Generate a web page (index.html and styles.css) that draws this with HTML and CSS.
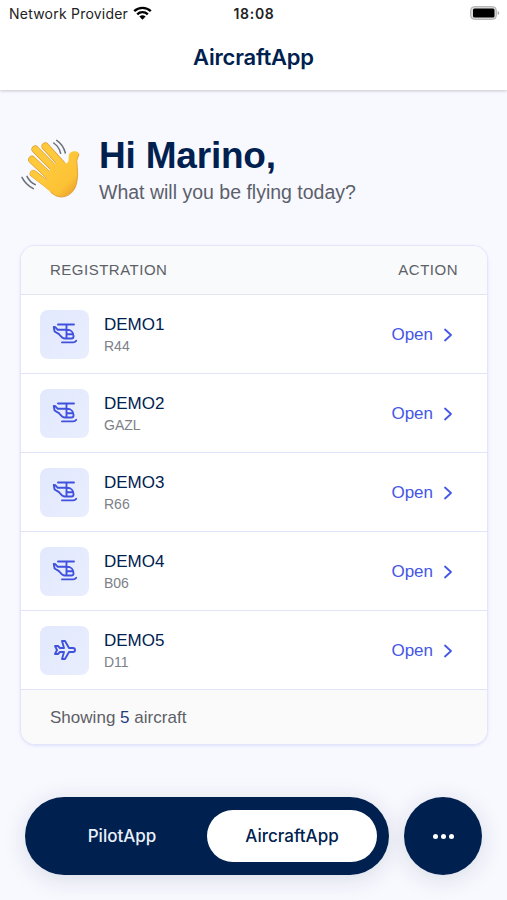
FILE: index.html
```
<!DOCTYPE html>
<html lang="en">

<head>
  <meta charset="UTF-8">
  <meta name="viewport" content="width=device-width, initial-scale=1">
  <title>AircraftApp</title>
  <link rel="stylesheet" href="styles.css">
</head>

<body>
  <svg class="symbols" width="0" height="0">
    <symbol id="helicopter" viewBox="0 0 26 24">
      <path d="M6 2.500H22M14.500 2.500V16.500M1.800 5l1.700.3 2.300 2.500H15c4 0 6.500 2.800 6.500 6.200v.5a2 2 0 0 1-2 2H13c-2.500 0-3.800-1.500-5-3.200-.8-1.200-2-1.800-3.300-2.500L2.600 9.500zM14.500 12.300H21M10 20.400h11.200c1.400 0 2.300-.6 3-1.700" />
    </symbol>
    <symbol id="plane" viewBox="0 0 24 24">
      <path d="M16 10h4a2 2 0 0 1 0 4h-4l-4 7H9l2-7H7l-2 2H2l2-4-2-4h3l2 2h4L9 3h3z" />
    </symbol>
    <symbol id="chevron" viewBox="0 0 10 14">
      <path d="M2 1.500l6 5.500-6 5.500" />
    </symbol>
  </svg>

  <header class="header">
    <div class="status">
      <div class="carrier">
        <span>Network Provider</span>
        <svg class="wifi" viewBox="0 0 19 14">
          <path d="M1.200 5.200a12 12 0 0 1 16.600 0M4.200 8.300a7.600 7.600 0 0 1 10.600 0" />
          <path class="wifi-dot" d="M6.400 10.600a4.500 4.500 0 0 1 6.200 0L9.500 13.800z" />
        </svg>
      </div>
      <div class="time">18:08</div>
      <svg class="battery" viewBox="0 0 30 14">
        <rect x=".7" y=".7" width="25.600" height="12.600" rx="3.500" fill="#ddd" stroke="#aaa" />
        <rect x="3" y="2.600" width="21.500" height="8.800" rx="1.500" fill="#000" />
        <path d="M27.700 5v4q1.600-.6 1.600-2t-1.600-2z" fill="#aaa" />
      </svg>
    </div>
    <h1 class="title">AircraftApp</h1>
  </header>

  <main>
    <section class="greeting">
      <svg class="wave" viewBox="30 39 186 186">
        <defs>
          <linearGradient id="skin" x1="0" y1="0" x2=".75" y2="1">
            <stop offset="0" stop-color="#ffcb3f" />
            <stop offset=".75" stop-color="#fcc235" />
            <stop offset="1" stop-color="#eca32c" />
          </linearGradient>
        </defs>
        <!-- fingers -->
        <g fill="none" stroke-linecap="round">
          <path stroke="#dc9a2a" stroke-width="23" d="M106 64L155 118M76 73L132 130M66 104L125 160" />
          <path stroke="#dc9a2a" stroke-width="22" d="M70 146L125 188" />
          <path stroke="#ffc93c" stroke-width="19" d="M106 64L155 118M76 73L132 130M66 104L125 160M70 146L125 188" />
        </g>
        <!-- palm and thumb -->
        <path fill="url(#skin)" d="M154 108Q163 119 172 113C180 108 172 90 180 84C187 78 198 77 205 83Q210 88 204 97Q199 104 201 116Q206 148 200 174C195 199 176 215 153 216Q138 216 122 202L104 186L113 150L126 121Z" />
        <path fill="none" stroke="#dc9a2a" stroke-width="2.500" d="M206 86q1 6-3 12-4 7-2 18 5 35-1 58c-6 26-24 42-47 42q-15 0-31-14" />
        <g fill="none" stroke="#6b7078" stroke-width="4.500" stroke-linecap="round">
          <path d="M140 46q20 13 26 38M131 54q17 12 21 31M51 154q7 16 25 25M36 157q10 21 34 34" />
        </g>
      </svg>
      <div>
        <h2 class="hello">Hi Marino,</h2>
        <p class="question">What will you be flying today?</p>
      </div>
    </section>

    <section class="card">
      <div class="card-head">
        <span>REGISTRATION</span>
        <span>ACTION</span>
      </div>
      <div class="row">
        <div class="icon"><svg class="heli"><use href="#helicopter" /></svg></div>
        <div class="aircraft">
          <div class="name">DEMO1</div>
          <div class="type">R44</div>
        </div>
        <a class="open">Open <svg class="chevron"><use href="#chevron" /></svg></a>
      </div>
      <div class="row">
        <div class="icon"><svg class="heli"><use href="#helicopter" /></svg></div>
        <div class="aircraft">
          <div class="name">DEMO2</div>
          <div class="type">GAZL</div>
        </div>
        <a class="open">Open <svg class="chevron"><use href="#chevron" /></svg></a>
      </div>
      <div class="row">
        <div class="icon"><svg class="heli"><use href="#helicopter" /></svg></div>
        <div class="aircraft">
          <div class="name">DEMO3</div>
          <div class="type">R66</div>
        </div>
        <a class="open">Open <svg class="chevron"><use href="#chevron" /></svg></a>
      </div>
      <div class="row">
        <div class="icon"><svg class="heli"><use href="#helicopter" /></svg></div>
        <div class="aircraft">
          <div class="name">DEMO4</div>
          <div class="type">B06</div>
        </div>
        <a class="open">Open <svg class="chevron"><use href="#chevron" /></svg></a>
      </div>
      <div class="row">
        <div class="icon"><svg class="plane"><use href="#plane" /></svg></div>
        <div class="aircraft">
          <div class="name">DEMO5</div>
          <div class="type">D11</div>
        </div>
        <a class="open">Open <svg class="chevron"><use href="#chevron" /></svg></a>
      </div>
      <div class="card-foot">Showing <b>5</b> aircraft</div>
    </section>
  </main>

  <nav class="nav">
    <div class="tabs">
      <a class="tab">PilotApp</a>
      <a class="tab active">AircraftApp</a>
    </div>
    <div class="more"><i></i><i></i><i></i></div>
  </nav>
</body>

</html>
```
FILE: styles.css
```
* {
  box-sizing: border-box;
}

body {
  margin: 0;
  height: 900px;
  overflow: hidden;
  display: flex;
  flex-direction: column;
  background-color: #f8f9ff;
  font-family: "Liberation Sans", Arial, sans-serif;
  color: #00214f;
}

svg {
  display: block;
  flex-shrink: 0;
}

.symbols {
  position: absolute;
}

.header {
  height: 90px;
  background: #fff;
  box-shadow: 0 1px 3px rgba(0, 0, 0, 0.2);
}

.status {
  height: 28px;
  padding: 0 7px 2px 9px;
  display: grid;
  grid-template-columns: 1fr auto 1fr;
  align-items: center;
  font-family: Inter, sans-serif;
  font-size: 14px;
  color: #222;
}

.carrier {
  display: flex;
  align-items: center;
  gap: 5px;
  letter-spacing: 0.22px;
  white-space: nowrap;
}

.wifi {
  width: 19px;
  height: 14px;
  margin-top: -1px;
  fill: none;
  stroke: #000;
  stroke-width: 2.4;
}

.wifi .wifi-dot {
  fill: #000;
  stroke: none;
}

.time {
  margin-left: -1px;
  font-weight: 600;
  letter-spacing: 0.7px;
}

.battery {
  width: 30px;
  height: 14px;
  justify-self: end;
}

.title {
  margin: 15px 0 0;
  text-align: center;
  font-family: Inter, sans-serif;
  font-size: 22px;
  line-height: 28px;
  font-weight: 600;
  letter-spacing: -0.2px;
}

.greeting {
  display: flex;
  padding: 44px 0 0 20px;
  gap: 17px;
}

.wave {
  width: 62px;
  height: 62px;
  margin-top: 4px;
}

.hello {
  margin: 0;
  font-size: 37px;
  line-height: 44px;
  letter-spacing: -0.2px;
}

.question {
  margin: 2px 0 0;
  font-size: 19.5px;
  line-height: 24px;
  color: #5b606b;
}

.card {
  height: 500px;
  margin: 41px 19px 0 20px;
  border: 1px solid #e2e5fb;
  border-radius: 15px;
  background: #fff;
  overflow: hidden;
  box-shadow: 0 1px 3px rgba(80, 90, 220, 0.15);
}

.card-head {
  height: 49px;
  padding: 0 29px 2px;
  display: flex;
  justify-content: space-between;
  align-items: center;
  background: #f9fafc;
  border-bottom: 1px solid #e2e4ef;
  font-size: 15px;
  letter-spacing: 0.5px;
  color: #5d6066;
}

.row {
  height: 79px;
  padding: 0 34px 0 19px;
  display: flex;
  align-items: center;
  border-bottom: 1px solid #e1e3f8;
}

.icon {
  width: 49px;
  height: 49px;
  display: flex;
  align-items: center;
  justify-content: center;
  border-radius: 8px;
  background: linear-gradient(135deg, #e2e9fd, #e9eefe);
}

.icon svg {
  width: 24px;
  height: 24px;
  fill: none;
  stroke: #4051dc;
  stroke-width: 1.9;
  stroke-linecap: round;
  stroke-linejoin: round;
}

.icon .heli {
  width: 26px;
}

.aircraft {
  flex: 1;
  padding: 1px 0 0 15px;
}

.name {
  font-size: 17px;
  line-height: 22px;
}

.type {
  font-size: 14px;
  line-height: 20px;
  color: #7c8087;
}

.open {
  display: flex;
  align-items: center;
  gap: 10px;
  padding-top: 1px;
  font-size: 17px;
  color: #4456e6;
}

.chevron {
  width: 10px;
  height: 14px;
  fill: none;
  stroke: #4456e6;
  stroke-width: 1.8;
  stroke-linecap: round;
  stroke-linejoin: round;
}

.card-foot {
  height: 55px;
  padding: 0 29px;
  line-height: 55px;
  background: #fafafb;
  font-size: 17px;
  letter-spacing: 0.02px;
  color: #5d6066;
}

.card-foot b {
  color: #1f3d78;
  font-weight: normal;
}

.nav {
  display: flex;
  gap: 15px;
  padding: 52px 25px 0;
}

.tabs,
.more {
  height: 78px;
  border-radius: 39px;
  background: #00214f;
  box-shadow: 0 4px 24px rgba(0, 20, 60, 0.13);
}

.tabs {
  width: 364px;
  display: flex;
  padding: 13px 12px;
}

.tab {
  flex: 1;
  height: 52px;
  border-radius: 26px;
  text-align: center;
  font-family: Inter, sans-serif;
  font-size: 17px;
  font-weight: 500;
  line-height: 52px;
  color: #eaf0fc;
}

.tab.active {
  background: #fff;
  color: #00214f;
}

.more {
  width: 78px;
  display: flex;
  align-items: center;
  justify-content: center;
  gap: 3px;
}

.more i {
  width: 5px;
  height: 5px;
  border-radius: 50%;
  background: #fff;
}
```
